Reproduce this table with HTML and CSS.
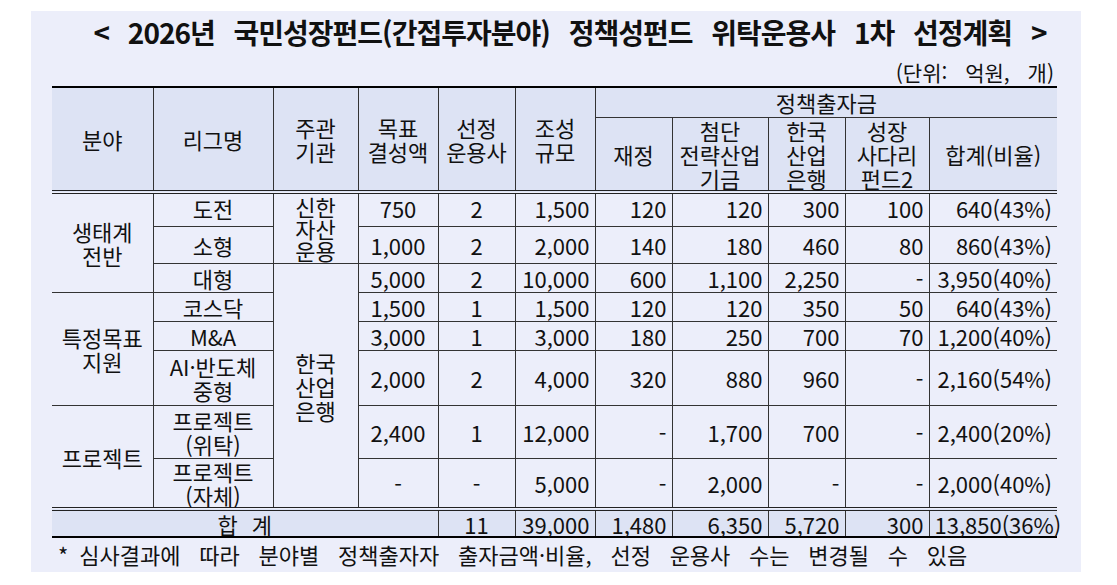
FILE: index.html
```html
<!DOCTYPE html>
<html lang="ko">
<head>
<meta charset="utf-8">
<title>2026년 국민성장펀드 정책성펀드 위탁운용사 1차 선정계획</title>
<link rel="stylesheet" href="styles.css">
</head>
<body>
<div class="panel">
  <h1 class="title">&lt; 2026년 국민성장펀드(간접투자분야) 정책성펀드 위탁운용사 1차 선정계획 &gt;</h1>
  <div class="unit">(단위: 억원, 개)</div>
  <table class="plan">
    <colgroup>
      <col class="w101"><col class="w120"><col class="w85"><col class="w80"><col class="w77"><col class="w80">
      <col class="w77"><col class="w96"><col class="w77"><col class="w84"><col class="w128">
    </colgroup>
    <thead>
      <tr class="h30">
        <th rowspan="2" class="l">분야</th>
        <th rowspan="2">리그명</th>
        <th rowspan="2">주관<br>기관</th>
        <th rowspan="2">목표<br>결성액</th>
        <th rowspan="2">선정<br>운용사</th>
        <th rowspan="2">조성<br>규모</th>
        <th colspan="5" class="r">정책출자금</th>
      </tr>
      <tr class="h73">
        <th>재정</th>
        <th>첨단<br>전략산업<br>기금</th>
        <th>한국<br>산업<br>은행</th>
        <th>성장<br>사다리<br>펀드2</th>
        <th class="r">합계(비율)</th>
      </tr>
    </thead>
    <tbody>
      <tr class="h35">
        <td rowspan="3" class="l c">생태계<br>전반</td>
        <td class="c up">도전</td>
        <td rowspan="2" class="c tight">신한<br>자산<br>운용</td>
        <td class="c up">750</td><td class="c up">2</td><td class="n up">1,500</td>
        <td class="n up">120</td><td class="n up">120</td><td class="n up">300</td><td class="n up">100</td><td class="n r up">640(43%)</td>
      </tr>
      <tr class="h37">
        <td class="c">소형</td>
        <td class="c">1,000</td><td class="c">2</td><td class="n">2,000</td>
        <td class="n">140</td><td class="n">180</td><td class="n">460</td><td class="n">80</td><td class="n r">860(43%)</td>
      </tr>
      <tr class="h29">
        <td class="c">대형</td>
        <td rowspan="6" class="c kdb">한국<br>산업<br>은행</td>
        <td class="c">5,000</td><td class="c">2</td><td class="n">10,000</td>
        <td class="n">600</td><td class="n">1,100</td><td class="n">2,250</td><td class="n">-</td><td class="n r">3,950(40%)</td>
      </tr>
      <tr class="h29">
        <td rowspan="3" class="l c">특정목표<br>지원</td>
        <td class="c">코스닥</td>
        <td class="c">1,500</td><td class="c">1</td><td class="n">1,500</td>
        <td class="n">120</td><td class="n">120</td><td class="n">350</td><td class="n">50</td><td class="n r">640(43%)</td>
      </tr>
      <tr class="h29">
        <td class="c">M&amp;A</td>
        <td class="c">3,000</td><td class="c">1</td><td class="n">3,000</td>
        <td class="n">180</td><td class="n">250</td><td class="n">700</td><td class="n">70</td><td class="n r">1,200(40%)</td>
      </tr>
      <tr class="h55">
        <td class="c">AI·반도체<br>중형</td>
        <td class="c">2,000</td><td class="c">2</td><td class="n">4,000</td>
        <td class="n">320</td><td class="n">880</td><td class="n">960</td><td class="n">-</td><td class="n r">2,160(54%)</td>
      </tr>
      <tr class="h53">
        <td rowspan="2" class="l c">프로젝트</td>
        <td class="c">프로젝트<br>(위탁)</td>
        <td class="c">2,400</td><td class="c">1</td><td class="n">12,000</td>
        <td class="n">-</td><td class="n">1,700</td><td class="n">700</td><td class="n">-</td><td class="n r">2,400(20%)</td>
      </tr>
      <tr class="h50">
        <td class="c">프로젝트<br>(자체)</td>
        <td class="c">-</td><td class="c">-</td><td class="n">5,000</td>
        <td class="n">-</td><td class="n">2,000</td><td class="n">-</td><td class="n">-</td><td class="n r">2,000(40%)</td>
      </tr>
      <tr class="h28 total">
        <td colspan="4" class="l c sum-label">합 계</td>
        <td class="c">11</td><td class="n">39,000</td>
        <td class="n">1,480</td><td class="n">6,350</td><td class="n">5,720</td><td class="n">300</td><td class="n r">13,850(36%)</td>
      </tr>
    </tbody>
  </table>
  <p class="note">*&#8194;심사결과에 따라 분야별 정책출자자 출자금액·비율, 선정 운용사 수는 변경될 수 있음</p>
</div>
</body>
</html>
```

FILE: styles.css
```css
* {
  box-sizing: border-box;
}

body {
  margin: 0;
  background: #ffffff;
  font-family: "Noto Sans CJK KR", "Noto Sans", sans-serif;
  color: #111111;
}

.panel {
  margin: 11px 0 0 31px;
  width: 1050px;
  height: 561px;
  background: #eceefa;
  padding: 0 24px 0 21px;
}

.title {
  margin: 0;
  height: 48px;
  padding: 1px 0 0 31px;
  font-size: 28px;
  line-height: 40px;
  font-weight: 700;
  text-align: center;
  letter-spacing: -1px;
  word-spacing: 12px;
  white-space: nowrap;
}

.unit {
  height: 27px;
  padding-right: 3px;
  font-size: 21px;
  line-height: 26px;
  text-align: right;
  word-spacing: 12px;
}

.plan {
  width: 1005px;
  table-layout: fixed;
  border-collapse: collapse;
  font-size: 22px;
  line-height: 24px;
  border-top: 2px solid #000;
  border-bottom: 2px solid #000;
}

.w101 { width: 101px; }
.w120 { width: 120px; }
.w85 { width: 85px; }
.w80 { width: 80px; }
.w77 { width: 77px; }
.w96 { width: 96px; }
.w84 { width: 84px; }
.w128 { width: 128px; }

.plan th,
.plan td {
  border: 1px solid #333;
  padding: 0 5px;
  vertical-align: middle;
  font-weight: 400;
  white-space: nowrap;
}

.plan th {
  background: #dde3f4;
  text-align: center;
}

.plan .l {
  border-left: hidden;
}

.plan .r {
  border-right: hidden;
}

.plan tbody tr:first-child td {
  border-top: 4px double #222;
}

.plan .total td {
  border-top: 4px double #222;
  background: #dde3f4;
}

.c {
  text-align: center;
}

.n {
  text-align: right;
}

.plan .up {
  padding-bottom: 3px;
}

.tight {
  line-height: 22px;
}

.kdb {
  padding-bottom: 12px;
}

.sum-label {
  word-spacing: 8px;
}

.h28 { height: 28px; }
.h29 { height: 29px; }
.h30 { height: 30px; }
.h35 { height: 35px; }
.h37 { height: 37px; }
.h50 { height: 50px; }
.h53 { height: 53px; }
.h55 { height: 55px; }
.h73 { height: 73px; }

.note {
  margin: 0;
  padding: 2px 0 0 6px;
  font-size: 22px;
  line-height: 28px;
  word-spacing: 12.6px;
  white-space: nowrap;
}
```
